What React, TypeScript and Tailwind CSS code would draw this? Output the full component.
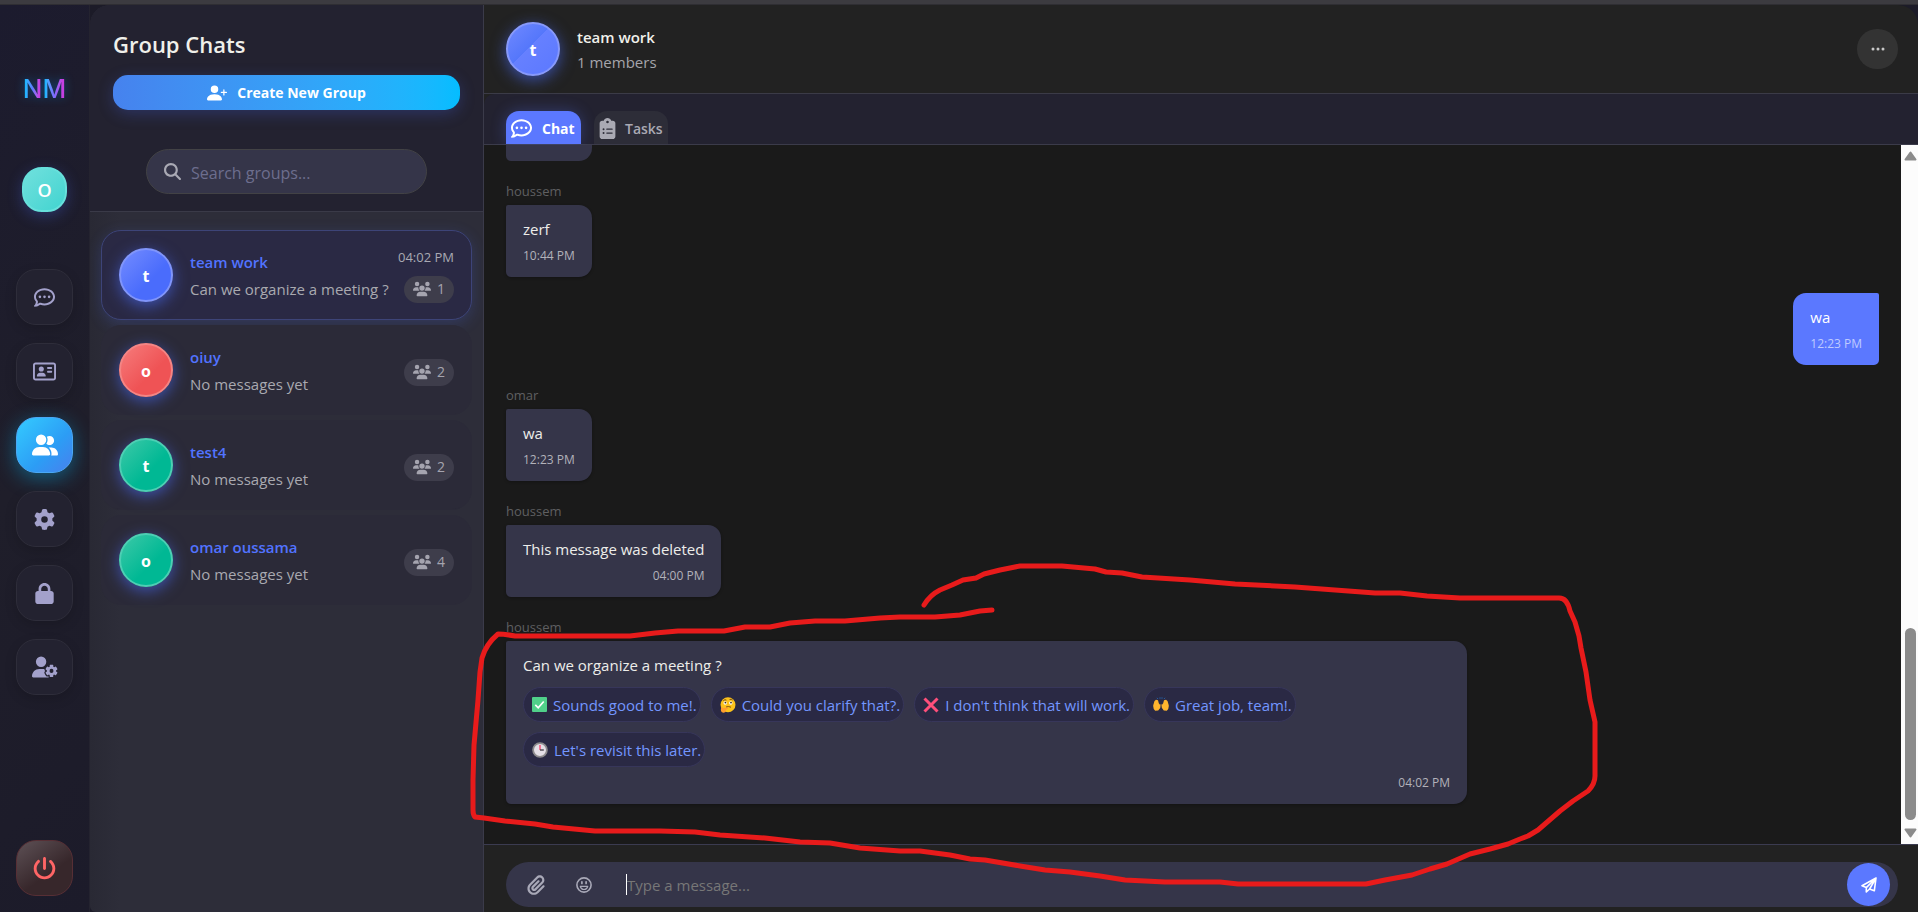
import type { ReactNode } from "react";
import {
  FaClipboardList,
  FaGear,
  FaLock,
  FaMagnifyingGlass,
  FaPaperclip,
  FaPowerOff,
  FaRegAddressCard,
  FaRegCommentDots,
  FaUserGear,
  FaUserGroup,
  FaUsers,
} from "react-icons/fa6";
import { BsPersonPlusFill, BsThreeDots } from "react-icons/bs";

type Tone = "blue" | "red" | "green";

const TONES: Record<Tone, string> = {
  blue: "bg-[linear-gradient(135deg,#748cff_0%,#4a6cfc_60%,#4a6cfc_100%)] border-[#8095fb]",
  red: "bg-[linear-gradient(135deg,#f67c7c_0%,#ef5355_60%,#ef5355_100%)] border-[#f48585]",
  green: "bg-[linear-gradient(135deg,#3dc9a8_0%,#00b894_60%,#00b894_100%)] border-[#4dcfb4]",
};

function Avatar({ letter, tone, split }: { letter: string; tone: Tone; split?: boolean }) {
  return (
    <div
      className={`flex size-[54px] shrink-0 items-center justify-center rounded-full border-2 pt-0.5 text-base leading-6 font-bold text-white shadow-[0_4px_15px_rgba(74,108,252,0.6)] ${
        split ? "border-[#8799fb] bg-[linear-gradient(135deg,#7089ff_0%,#5577fb_44%,#6680ff_45%,#5b78ff_100%)]" : TONES[tone]
      }`}
    >
      {letter}
    </div>
  );
}

const NAV: { label: string; icon: ReactNode; active?: boolean }[] = [
  { label: "Chats", icon: <FaRegCommentDots size={21} /> },
  { label: "Contacts", icon: <FaRegAddressCard size={23} /> },
  { label: "Groups", icon: <FaUserGroup size={26} />, active: true },
  { label: "Settings", icon: <FaGear size={21} /> },
  { label: "Privacy", icon: <FaLock size={21} /> },
  { label: "Account", icon: <FaUserGear size={26} /> },
];

function Rail() {
  return (
    <nav className="flex w-[90px] shrink-0 flex-col items-center border-r border-[#24232f] bg-[linear-gradient(135deg,#1c1b2e,#1f1e2a_50%,#1c1b2a)] pb-4">
      <div className="mt-[66px] flex h-9 items-center font-['Inter','Open_Sans',sans-serif] text-[26px] leading-9 font-medium drop-shadow-[0_0_5px_rgba(0,150,255,0.4)]">
        <span className="bg-linear-to-r from-[#1fb4ff] from-15% via-[#5a7cff] to-[#c63fe0] to-85% bg-clip-text text-transparent">N</span>
        <span className="bg-linear-to-r from-[#1fb4ff] from-15% via-[#7a6cff] to-[#c63fe0] to-85% bg-clip-text text-transparent">M</span>
      </div>
      <div className="mt-[60px] flex size-[45px] items-center justify-center rounded-[20px] border-2 border-[#67e0dc] bg-linear-to-br from-[#6fe0dd] to-[#3fd4d0] text-lg leading-6 font-semibold text-white shadow-[0_4px_15px_rgba(74,108,252,0.3)]">
        O
      </div>
      <div className="mt-[57px] flex flex-col gap-[18px]">
        {NAV.map((n) => (
          <button
            key={n.label}
            type="button"
            aria-label={n.label}
            className={
              n.active
                ? "flex h-14 w-[57px] items-center justify-center rounded-[20px] border border-[#4aa8f5] bg-[linear-gradient(135deg,#34cbff,#2c9df5_60%,#4880ee)] text-white shadow-[0_5px_20px_rgba(0,190,255,0.4)]"
                : "flex h-14 w-[57px] items-center justify-center rounded-[20px] border border-[#2e2d3a] bg-[#232230] text-[#a3a1cb] shadow-[0_4px_12px_rgba(0,0,0,0.15)]"
            }
          >
            {n.icon}
          </button>
        ))}
      </div>
      <button
        type="button"
        aria-label="Log out"
        className="mt-auto flex h-14 w-[57px] items-center justify-center rounded-[20px] border border-[#572f35] bg-[linear-gradient(145deg,#5e5156,#37272b_60%,#37272b)] text-[#ff6565]"
      >
        <FaPowerOff size={23} />
      </button>
    </nav>
  );
}

const GROUPS: { name: string; last: string; count: number; tone: Tone; time?: string }[] = [
  { name: "team work", last: "Can we organize a meeting ?", count: 1, tone: "blue", time: "04:02 PM" },
  { name: "oiuy", last: "No messages yet", count: 2, tone: "red" },
  { name: "test4", last: "No messages yet", count: 2, tone: "green" },
  { name: "omar oussama", last: "No messages yet", count: 4, tone: "green" },
];

function GroupPanel() {
  return (
    <aside className="flex w-[394px] shrink-0 flex-col overflow-hidden rounded-tl-[20px] rounded-bl-[6px] border-r border-[#3b3b4a] bg-[linear-gradient(90deg,#292934,#2d2d39_30px)]">
      <header className="bg-[#232230] px-[23px] pt-[22px] pb-[22px] shadow-[0_2px_8px_rgba(0,0,0,0.15)]">
        <h1 className="text-[22px] leading-[34px] font-semibold text-[#f0f0ea]">Group Chats</h1>
        <button
          type="button"
          className="mt-[14px] flex h-[35px] w-full items-center justify-center gap-[10px] rounded-[15px] bg-linear-to-r from-[#4682ee] to-[#04bdff] text-[14px] leading-6 font-bold text-white shadow-[0_4px_15px_rgba(74,108,252,0.25)]"
        >
          <BsPersonPlusFill size={20} />
          Create New Group
        </button>
      </header>
      <div className="border-b border-[#3a3a48] bg-[#232230] px-14 py-[17px]">
        <label className="flex h-[45px] items-center gap-[10px] rounded-full border border-[#424245] bg-[#353549] px-[17px] text-[#a9a9b4]">
          <FaMagnifyingGlass size={17} className="shrink-0" />
          <input
            type="text"
            aria-label="Search groups"
            placeholder="Search groups..."
            className="w-full bg-transparent pt-0.5 text-base leading-6 text-white outline-none placeholder:text-[#6d6e8e]"
          />
        </label>
      </div>
      <ul className="flex flex-col gap-[5px] px-[11px] pt-[18px]">
        {GROUPS.map((g) => (
          <li
            key={g.name}
            className={
              g.time
                ? "flex h-[90px] items-center rounded-[20px] border border-[#3d4478] bg-[#2a2944] px-[17px] shadow-[0_4px_15px_rgba(74,108,252,0.2)]"
                : "flex h-[90px] items-center rounded-[20px] border border-[#2b2a38] bg-[#2b2a38] px-[17px]"
            }
          >
            <Avatar letter={g.name[0]} tone={g.tone} />
            <div className="ml-[17px] min-w-0 flex-1 pt-0.5">
              <div className="text-[15px] leading-[27px] font-semibold text-[#5273ff]">{g.name}</div>
              <div className="truncate text-[15px] leading-[27px] text-[#a9a9b0]">{g.last}</div>
            </div>
            <div className="flex flex-col items-end">
              {g.time && <span className="text-[13px] leading-[18px] text-[#a9a9b3]">{g.time}</span>}
              <span className={`flex h-[27px] w-[50px] items-center justify-center gap-1.5 rounded-full bg-[#3e3d4b] text-sm leading-5 text-[#a5a4af] ${g.time ? "mt-[10px]" : "mt-1"}`}>
                <FaUsers size={18} />
                {g.count}
              </span>
            </div>
          </li>
        ))}
      </ul>
    </aside>
  );
}

function CheckMark() {
  return (
    <svg viewBox="0 0 16 16" className="size-[15px]" aria-hidden="true">
      <rect width="16" height="16" rx="1" fill="#50d08a" />
      <path d="M3.5 8.5 6.6 11.5 12.5 4.8" fill="none" stroke="#fff" strokeWidth="1.8" />
    </svg>
  );
}

function Thinking() {
  return (
    <svg viewBox="0 0 16 16" className="size-4" aria-hidden="true">
      <circle cx="8" cy="7.8" r="7.5" fill="#fcc21b" />
      <circle cx="5.2" cy="6" r="1.7" fill="#fff" />
      <circle cx="10.8" cy="6" r="1.7" fill="#fff" />
      <circle cx="5.4" cy="5.6" r="0.9" fill="#3b2a1a" />
      <circle cx="11" cy="5.6" r="0.9" fill="#3b2a1a" />
      <path d="M3.4 3.6q1.5-1.4 3-.5M9.6 2.5q1.8-.7 3 .5M6 10q2.5-1 5 .2" fill="none" stroke="#6b4413" strokeWidth="0.9" />
      <path d="M1.5 9.5q1 0 1.2 1.6l5-.6q.9.1.3 1L5.8 13q.2 2.6-2 2.8-2.8 0-3-3z" fill="#ff9d2e" />
    </svg>
  );
}

function CrossMark() {
  return (
    <svg viewBox="0 0 16 16" className="size-4" aria-hidden="true">
      <path d="M1.5 1.5 14.5 14.5M14.5 1.5 1.5 14.5" fill="none" stroke="#ff4f7b" strokeWidth="3" />
    </svg>
  );
}

function Hands() {
  return (
    <svg viewBox="0 0 16 16" className="size-4" aria-hidden="true">
      <path d="M5 2 4 .8M7 1.8V.3M9 1.8V.3M11 2l1-1.2" stroke="#2563ae" strokeWidth="0.9" />
      <path d="M.3 8 1.5 4 3 2.800l2 .4.8 3 1.2 1.600 1-.2-.4 3-2.400 2.800-3 .4Q-.2 11.500 .3 8z" fill="#ffb52e" />
      <path d="M15.700 8 14.500 4 13 2.800l-2 .4-.8 3L9 7.800l-1-.2.600 3 2.200 2.800 3 .4Q16.200 11.500 15.700 8z" fill="#ffb52e" />
      <path d="M8 8v5" stroke="#2a2944" strokeWidth="0.8" />
    </svg>
  );
}

function ClockFace() {
  return (
    <svg viewBox="0 0 16 16" className="size-4" aria-hidden="true">
      <circle cx="8" cy="8" r="6.9" fill="#e4dfe6" stroke="#8c8a8c" strokeWidth="1.8" />
      <path d="M8 3v5" stroke="#f8476f" strokeWidth="1.4" />
      <path d="M8 8h3.8" stroke="#4a454d" strokeWidth="1.4" />
    </svg>
  );
}

const REPLIES: { icon: ReactNode; text: string }[] = [
  { icon: <CheckMark />, text: "Sounds good to me!." },
  { icon: <Thinking />, text: "Could you clarify that?." },
  { icon: <CrossMark />, text: "I don't think that will work." },
  { icon: <Hands />, text: "Great job, team!." },
  { icon: <ClockFace />, text: "Let's revisit this later." },
];

type MessageProps = { author?: string; text: string; time: string; own?: boolean; replies?: boolean };

const MESSAGES: MessageProps[] = [
  { author: "houssem", text: "zerf", time: "10:44 PM" },
  { text: "wa", time: "12:23 PM", own: true },
  { author: "omar", text: "wa", time: "12:23 PM" },
  { author: "houssem", text: "This message was deleted", time: "04:00 PM" },
  { author: "houssem", text: "Can we organize a meeting ?", time: "04:02 PM", replies: true },
];

function Message({ author, text, time, own, replies }: MessageProps) {
  return (
    <div className={own ? "flex max-w-[70%] flex-col self-end" : "flex max-w-[70%] flex-col self-start"}>
      {author && <div className="h-7 pt-1 text-[13px] leading-5 text-[#5f5f61]">{author}</div>}
      <div
        className={
          own
            ? "rounded-l-[13px] rounded-tr-[2px] rounded-br-[5px] bg-[#5b78ff] px-[17px] pt-3 pb-[11px] text-white"
            : "rounded-r-[13px] rounded-tl-[2px] rounded-bl-[5px] bg-[#353549] px-[17px] pt-3 pb-[11px] text-[#ededea] shadow-[0_1px_3px_rgba(0,0,0,0.3)]"
        }
      >
        <p className="text-[15px] leading-6">{text}</p>
        {replies && (
          <div className="mt-[10px] mb-1.5 flex flex-wrap gap-[10px]">
            {REPLIES.map((r) => (
              <button
                key={r.text}
                type="button"
                className="flex h-[35px] items-center gap-[6px] rounded-full border border-[#37365a] bg-[#2a2944] pr-[3px] pl-2 text-[15px] leading-6 text-[#7396ff]"
              >
                {r.icon}
                {r.text}
              </button>
            ))}
          </div>
        )}
        <div className={`text-right text-[12px] leading-5 font-medium ${replies ? "" : "mt-[5px]"} ${own ? "text-[#bfcbff]" : "text-[#b2b2ba]"}`}>
          {time}
        </div>
      </div>
    </div>
  );
}

function Scrollbar() {
  return (
    <div className="flex w-[17px] shrink-0 flex-col items-center bg-[#fcfcfc] py-1.5 pl-[2px]" aria-hidden="true">
      <svg viewBox="0 0 13 10" className="h-[10px] w-[13px]">
        <path d="M6.5 1.5 11.5 8.5H1.5z" fill="#8b8b8b" stroke="#8b8b8b" strokeWidth="2" strokeLinejoin="round" />
      </svg>
      <div className="mt-auto mb-2 h-48 w-[11px] rounded-full bg-[#8b8b8b]" />
      <svg viewBox="0 0 13 10" className="h-[10px] w-[13px]">
        <path d="M6.5 8.5 11.5 1.5H1.5z" fill="#8b8b8b" stroke="#8b8b8b" strokeWidth="2" strokeLinejoin="round" />
      </svg>
    </div>
  );
}

function SmileIcon() {
  return (
    <svg viewBox="0 0 16 16" className="size-4" fill="none" stroke="currentColor" strokeLinecap="round" aria-hidden="true">
      <circle cx="8" cy="8" r="7.1" strokeWidth="1.6" />
      <path d="M5.9 4.8v1.7M10.1 4.8v1.7" strokeWidth="1.7" />
      <path d="M4.3 9.3h7.4Q11 12.5 8 12.5T4.300 9.300z" strokeWidth="1.2" strokeLinejoin="round" />
    </svg>
  );
}

function SendIcon() {
  return (
    <svg viewBox="0 0 16 16" className="size-4" fill="none" stroke="#fff" strokeWidth="1.6" strokeLinejoin="round" aria-hidden="true">
      <path d="M15 1 1 8.7l4.3 1.9L15 1 13.3 13.8 8.6 12 15 1 5.3 10.600V15l3.300-3" />
    </svg>
  );
}

function Conversation() {
  return (
    <main className="flex min-w-0 flex-1 flex-col overflow-hidden rounded-tr-[20px] bg-[#222222]">
      <header className="flex h-[89px] shrink-0 items-center border-b border-[#3b3b47] pr-5 pl-[22px]">
        <Avatar letter="t" tone="blue" split />
        <div className="ml-[17px] flex-1 pt-0.5">
          <h2 className="text-[15px] leading-[25px] font-semibold text-[#f0f0ea]">team work</h2>
          <p className="text-[15px] leading-[25px] text-[#a5a5ab]">1 members</p>
        </div>
        <button type="button" aria-label="More options" className="flex h-10 w-[41px] items-center justify-center rounded-full bg-[#333333] text-[#c8c8c8]">
          <BsThreeDots size={16} />
        </button>
      </header>
      <div className="flex h-[51px] shrink-0 items-end gap-[13px] rounded-tl-[10px] border-b border-[#3b3b4a] bg-[#232230] pl-[22px]">
        <button type="button" className="flex h-[33px] w-[75px] items-center gap-[10px] rounded-t-[13px] bg-[#5b78ff] pt-0.5 pl-[5px] text-sm leading-6 font-bold text-white shadow-[0_0_15px_rgba(91,120,255,0.3)]">
          <FaRegCommentDots size={21} />
          Chat
        </button>
        <button type="button" className="flex h-[33px] w-[74px] items-center gap-[7px] rounded-t-[13px] bg-[#2d2d38] pt-0.5 pl-[3px] text-sm leading-6 font-semibold text-[#a9a9b3]">
          <FaClipboardList size={21} />
          Tasks
        </button>
      </div>
      <div className="flex min-h-0 flex-1 bg-[#1a1a1a]">
        <div className="flex min-w-0 flex-1 flex-col justify-end gap-4 overflow-hidden px-[22px] pb-10">
          <div className="h-[72px] w-[86px] shrink-0 self-start rounded-r-[13px] rounded-tl-[2px] rounded-bl-[5px] bg-[#353549]" />
          {MESSAGES.map((m, i) => (
            <Message key={i} {...m} />
          ))}
        </div>
        <Scrollbar />
      </div>
      <footer className="border-t border-[#3b3b50] pt-[17px] pr-5 pb-[5px] pl-[22px]">
        <form className="flex h-[45px] items-center rounded-full bg-[#353549] pr-2 pl-[20px] text-[#a9a9b8]">
          <button type="button" aria-label="Attach a file" className="flex w-5 justify-center">
            <FaPaperclip size={20} />
          </button>
          <button type="button" aria-label="Insert an emoji" className="ml-[30px] flex w-4 justify-center">
            <SmileIcon />
          </button>
          <span className="ml-[34px] h-[21px] w-px bg-white" />
          <input
            type="text"
            aria-label="Message"
            placeholder="Type a message..."
            className="min-w-0 flex-1 bg-transparent text-[15px] leading-6 text-white outline-none placeholder:text-[#777777]"
          />
          <button type="button" aria-label="Send" className="flex size-[43px] items-center justify-center rounded-full bg-[#5b78ff]">
            <SendIcon />
          </button>
        </form>
      </footer>
    </main>
  );
}

function Scribble() {
  return (
    <svg
      viewBox="0 0 1918 912"
      className="pointer-events-none absolute inset-0 size-full"
      fill="none"
      stroke="#e81b1b"
      strokeWidth="5"
      strokeLinecap="round"
      strokeLinejoin="round"
      aria-hidden="true"
    >
      <path d="M924 605Q930 595 940 590L952 585 963 580 976 578 984 574 1000 570 1010 568 1020 566 1062 566 1095 569 1106 572 1122 573 1142 577 1190 580 1235 584 1295 587 1375 593 1400 593 1427 596 1460 598H1558Q1567 597 1570 611L1575 622 1579 636 1581 648 1586 672 1590 700 1595 722V776Q1595 784 1588 791L1573 801 1560 811 1538 830 1528 836 1520 839 1508 844 1490 849 1470 854 1447 864 1430 869 1412 875 1385 880 1366 884H1238L1220 882H1165L1145 881 1125 880 1100 876 1070 872 1045 870 1020 866 985 860 970 859 950 855 920 851 900 851 860 848 830 843 800 842 765 838 720 835 695 832 660 831H595L553 827 535 824 505 821 484 818 475 817Q473 815 473 810V780L474 745 478 700 480 672 482 658Q486 644 498 634 504 634 515 636H630L655 633 678 631H724L745 627 770 627 790 623 815 621H845L880 618 900 617H935L960 615 980 611 992 610" />
    </svg>
  );
}

export default function App() {
  return (
    <div className="relative flex h-screen flex-col overflow-hidden bg-[#1c1b28] font-['Open_Sans','Noto_Sans',sans-serif]">
      <div className="h-[5px] shrink-0 border-b border-[#2f2e33] bg-[#3c3b40]" />
      <div className="flex min-h-0 flex-1">
        <Rail />
        <GroupPanel />
        <Conversation />
      </div>
      <Scribble />
    </div>
  );
}
